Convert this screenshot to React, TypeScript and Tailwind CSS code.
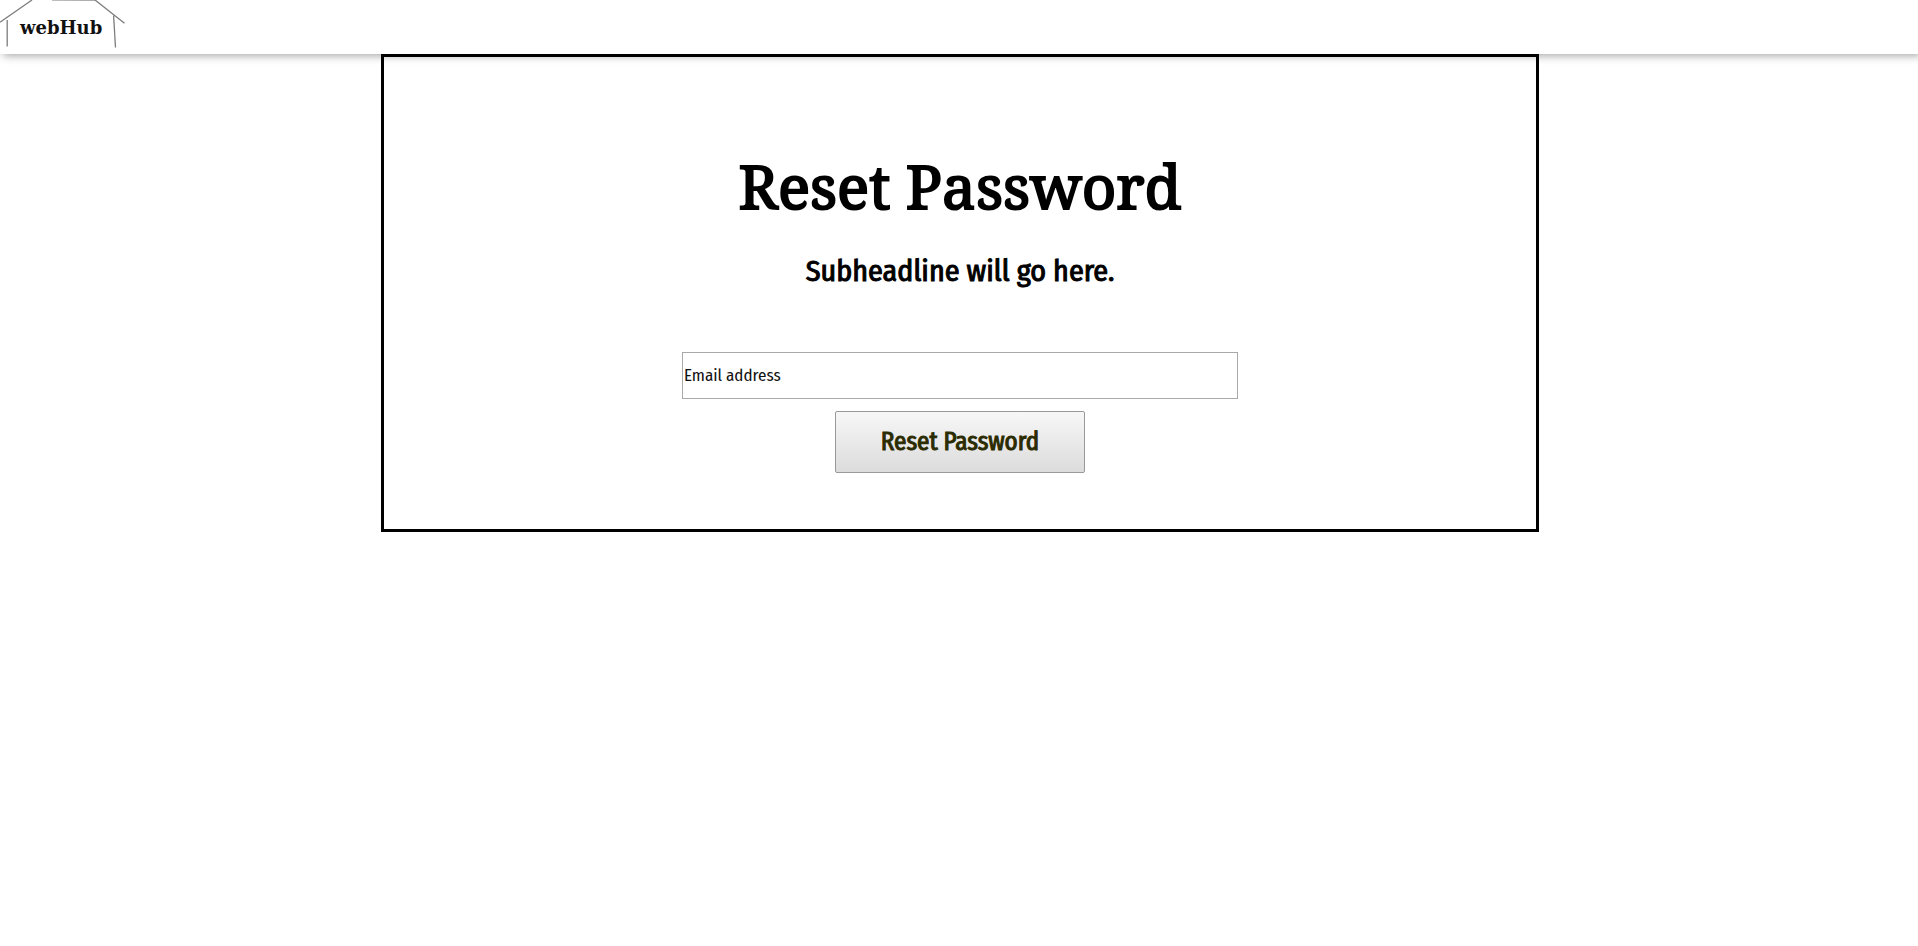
import type { FormEvent } from 'react';

function Logo() {
  return (
    <a href="/" className="relative flex h-12 w-[126px] items-center pt-2 pl-5">
      <svg
        aria-hidden="true"
        viewBox="0 0 126 48"
        className="absolute inset-0 h-12 w-[126px]"
        fill="none"
        stroke="#7c7c7c"
        strokeWidth="1.3"
      >
        <path d="M0 22.3 L32 0" />
        <path d="M52 0.2 L95 0.4" stroke="#aaaaaa" />
        <path d="M95 0 L124.5 23.3" />
        <path d="M7.2 20 V46.5" />
        <path d="M113.6 15.5 L115.5 47.5" />
      </svg>
      <span className="relative font-['DejaVu_Serif',serif] text-[18px] leading-5 font-bold text-[#111111]">
        webHub
      </span>
    </a>
  );
}

export default function App() {
  const handleSubmit = (event: FormEvent) => event.preventDefault();

  return (
    <div className="min-h-screen bg-white font-['Fira_Sans_Condensed',sans-serif] text-black">
      <header className="h-[54px] bg-white shadow-[3px_2px_8px_#aaaaaa]">
        <Logo />
      </header>
      <div className="relative flex justify-center pl-0.5">
        <main className="flex w-full max-w-[1158px] flex-col items-center border-3 border-black px-4 pt-[99px] pb-14">
          <h1 className="text-center font-['Noto_Serif',serif] text-[60px] leading-[60px] font-normal [-webkit-text-stroke:2px_#000]">
            Reset Password
          </h1>
          <p className="mt-[37px] text-center text-3xl leading-9 [-webkit-text-stroke:1px_#000]">
            Subheadline will go here.
          </p>
          <form onSubmit={handleSubmit} className="mt-[63px] flex w-full flex-col items-center gap-3">
            <input
              type="email"
              aria-label="Email address"
              placeholder="Email address"
              className="h-[47px] w-full max-w-[556px] border border-[#a9a9a9] bg-white px-px text-[17px] placeholder:text-[#111111] placeholder:opacity-100"
            />
            <button
              type="submit"
              className="h-[62px] w-[250px] rounded-xs border border-[#999999] bg-linear-to-b from-[#f7f7f7] to-[#dcdcdc] pt-0.5 text-[25px] text-[#2b2b00] [-webkit-text-stroke:1px_#2b2b00]"
            >
              Reset Password
            </button>
          </form>
        </main>
      </div>
    </div>
  );
}
